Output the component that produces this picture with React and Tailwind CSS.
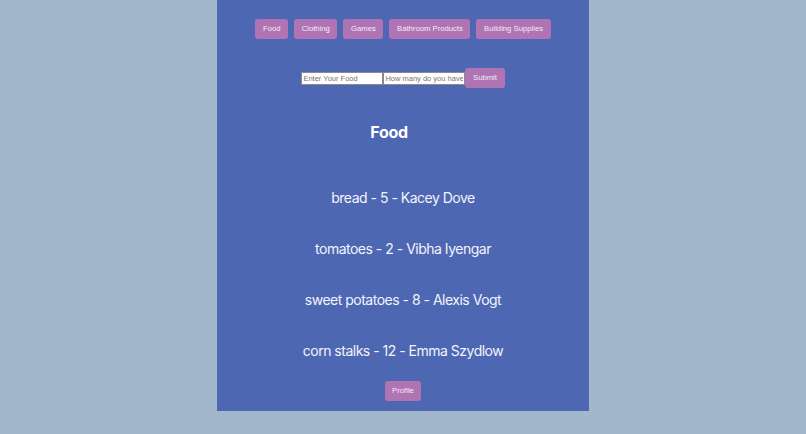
import React from 'react';

const categories = ['Food', 'Clothing', 'Games', 'Bathroom Products', 'Building Supplies'];

const items = [
  { name: 'bread', count: 5, owner: 'Kacey Dove' },
  { name: 'tomatoes', count: 2, owner: 'Vibha Iyengar' },
  { name: 'sweet potatoes', count: 8, owner: 'Alexis Vogt' },
  { name: 'corn stalks', count: 12, owner: 'Emma Szydlow' },
];

const btn = "h-[20px] px-[7.6px] rounded-[3px] bg-[#b074b4] text-[#f4ebf5] text-[7.7px] leading-none font-['Liberation_Sans',Arial,sans-serif]";
const field = "h-[13px] w-[82px] border border-[#8a8a8a] bg-white px-[1px] text-[7.5px] leading-none text-black placeholder:text-[#757575] font-['Liberation_Sans',Arial,sans-serif] outline-none";

export default function App() {
  return (
    <div className="min-h-[434px] w-full bg-[#a1b7cc]">
      <div className="mx-auto flex h-[411px] w-[372px] flex-col items-center bg-[#4d67b3] pt-[19px] font-['Inter',sans-serif]">
        <div className="flex gap-[6px]">
          {categories.map(c => (
            <button key={c} className={btn}>{c}</button>
          ))}
        </div>

        <form className="mt-[29px] flex items-center" onSubmit={e => e.preventDefault()}>
          <input placeholder="Enter Your Food" className={field} />
          <input placeholder="How many do you have" className={field} />
          <button type="submit" className={btn}>Submit</button>
        </form>

        {/* title sits a little left of centre in the original */}
        <h1 className="mr-[28px] mt-[34px] text-[16px] font-bold leading-[20px] tracking-[-0.3px] text-white">Food</h1>

        <div className="mt-[46px] flex flex-col items-center gap-[31px]">
          {items.map(i => (
            <p key={i.name} className="text-[14px] leading-[20px] tracking-[-0.5px] text-[#f3f4fb]">
              {i.name} - {i.count} - {i.owner}
            </p>
          ))}
        </div>

        <button className={`mt-[20px] ${btn}`}>Profile</button>
      </div>
    </div>
  );
}
